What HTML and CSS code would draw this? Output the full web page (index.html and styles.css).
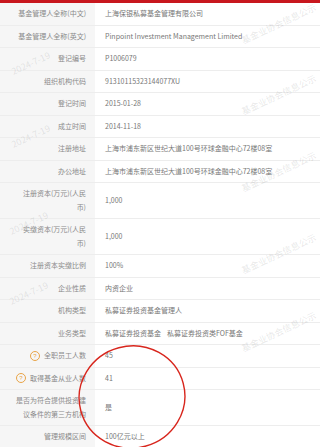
FILE: index.html
```html
<!DOCTYPE html>
<html lang="zh-CN">
<head>
<meta charset="utf-8">
<link rel="stylesheet" href="styles.css">
</head>
<body>
<div class="page">
  <div class="topbar"></div>
  <div class="table">
    <div class="row"><div class="label">基金管理人全称(中文)</div><div class="value">上海保银私募基金管理有限公司</div></div>
    <div class="row"><div class="label">基金管理人全称(英文)</div><div class="value">Pinpoint Investment Management Limited</div></div>
    <div class="row"><div class="label">登记编号</div><div class="value">P1006079</div></div>
    <div class="row"><div class="label">组织机构代码</div><div class="value">91310115323144077XU</div></div>
    <div class="row"><div class="label">登记时间</div><div class="value">2015-01-28</div></div>
    <div class="row"><div class="label">成立时间</div><div class="value">2014-11-18</div></div>
    <div class="row"><div class="label">注册地址</div><div class="value">上海市浦东新区世纪大道100号环球金融中心72楼08室</div></div>
    <div class="row"><div class="label">办公地址</div><div class="value">上海市浦东新区世纪大道100号环球金融中心72楼08室</div></div>
    <div class="row"><div class="label">注册资本(万元)(人民币)</div><div class="value">1,000</div></div>
    <div class="row"><div class="label">实缴资本(万元)(人民币)</div><div class="value">1,000</div></div>
    <div class="row"><div class="label">注册资本实缴比例</div><div class="value">100%</div></div>
    <div class="row"><div class="label">企业性质</div><div class="value">内资企业</div></div>
    <div class="row"><div class="label">机构类型</div><div class="value">私募证券投资基金管理人</div></div>
    <div class="row"><div class="label">业务类型</div><div class="value"><span class="biz">私募证券投资基金</span><span>私募证券投资类FOF基金</span></div></div>
    <div class="row"><div class="label"><span class="help">?</span>全职员工人数</div><div class="value">45</div></div>
    <div class="row"><div class="label"><span class="help">?</span>取得基金从业人数</div><div class="value">41</div></div>
    <div class="row"><div class="label">是否为符合提供投资建议条件的第三方机构</div><div class="value">是</div></div>
    <div class="row"><div class="label">管理规模区间</div><div class="value">100亿元以上</div></div>
  </div>

  <div class="watermarks">
    <span class="wm" style="left:14px;top:76px">2024-7-19</span>
    <span class="wm" style="left:14px;top:149px">2024-7-19</span>
    <span class="wm" style="left:12px;top:236px">2024-7-19</span>
    <span class="wm" style="left:12px;top:306px">2024-7-19</span>
    <span class="wm" style="left:244px;top:45px">基金业协会信息公示</span>
    <span class="wm" style="left:244px;top:116px">基金业协会信息公示</span>
    <span class="wm" style="left:244px;top:193px">基金业协会信息公示</span>
    <span class="wm" style="left:244px;top:275px">基金业协会信息公示</span>
    <span class="wm" style="left:244px;top:353px">基金业协会信息公示</span>
  </div>

  <svg class="annot" width="320" height="447" viewBox="0 0 320 447">
    <ellipse cx="132" cy="397" rx="53" ry="51" transform="rotate(-15 132 397)" fill="none" stroke="#d8261d" stroke-width="1.4"/>
  </svg>
</div>
</body>
</html>
```

FILE: styles.css
```css
html, body {
  margin: 0;
  padding: 0;
  background: #fff;
}
body {
  width: 320px;
  height: 447px;
  overflow: hidden;
  font-family: "Noto Sans CJK SC", "Noto Sans", sans-serif;
  font-size: 7px;
  color: #777;
}
.page {
  position: relative;
  width: 320px;
  height: 447px;
  overflow: hidden;
}
.topbar {
  height: 3px;
  background: #c8171e;
}
.table {
  display: flex;
  flex-direction: column;
}
.row {
  display: grid;
  grid-template-columns: 95px 1fr;
  border-bottom: 1px solid #ededed;
  line-height: 13.5px;
}
.label {
  background: #f6f6f6;
  text-align: right;
  padding: 4px 9px 4px 15px;
  color: #8a8a8a;
  display: flex;
  align-items: center;
  justify-content: flex-end;
  gap: 4px;
}
.value {
  padding: 4px 8px 4px 10px;
  color: #777;
  display: flex;
  align-items: center;
  white-space: nowrap;
}
.biz {
  margin-right: 6px;
}
.help {
  flex: none;
  width: 8px;
  height: 8px;
  border: 1px solid #e9a447;
  border-radius: 50%;
  color: #e9a447;
  font-size: 6px;
  line-height: 8px;
  text-align: center;
  font-family: "Liberation Sans", sans-serif;
}
.watermarks {
  position: absolute;
  inset: 0;
  pointer-events: none;
}
.wm {
  position: absolute;
  white-space: nowrap;
  font-size: 9px;
  line-height: 9px;
  margin-top: -9px;
  color: rgba(110, 110, 110, 0.17);
  transform-origin: 0 100%;
  transform: rotate(-25deg);
}
.annot {
  position: absolute;
  left: 0;
  top: 0;
  pointer-events: none;
}
```
